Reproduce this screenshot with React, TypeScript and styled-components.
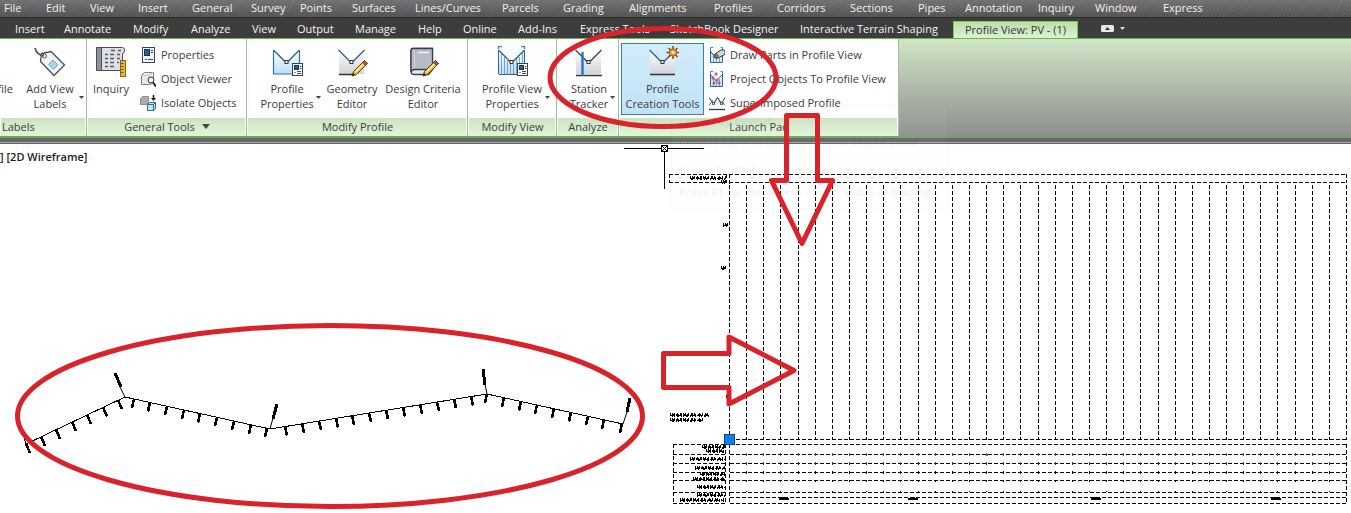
import React from "react";
import styled, { createGlobalStyle } from "styled-components";

const GlobalStyle = createGlobalStyle`
  *, *::before, *::after { box-sizing: border-box; }
  body {
    margin: 0;
    background: #fff;
    font-family: "Open Sans", "Noto Sans", sans-serif;
    font-size: 11px;
    line-height: 15px;
    color: #3c3c3c;
  }
  button {
    font: inherit;
    color: inherit;
    background: none;
    border: 0;
    padding: 0;
    margin: 0;
    white-space: nowrap;
  }
`;

const Page = styled.div`
  position: relative;
  display: flex;
  flex-direction: column;
  min-height: 100vh;
  overflow: hidden;
`;

const MenuBar = styled.nav`
  display: grid;
  grid-template-columns:
    42px 44px 48px 54px 59px 49px 52px 63px 87px 61px
    66px 85px 63px 73px 68px 47px 73px 57px 68px auto;
  justify-content: start;
  height: 18px;
  padding-left: 4px;
  border-bottom: 1px solid #2b2b2b;
  background:
    repeating-linear-gradient(135deg, rgba(255, 255, 255, 0.05) 0 1px, transparent 1px 3px),
    linear-gradient(#717171, #525252);
`;

const MenuItem = styled.button`
  padding-bottom: 2px;
  text-align: left;
  color: #f2f2f2;
`;

const TabBar = styled.div`
  display: grid;
  grid-template-columns:
    49px 69px 58px 61px 45px 58px 63px 45px 55px 62px
    90px 130px 153px 125px auto;
  justify-content: start;
  height: 20px;
  padding-left: 15px;
  background: #3d3d3d;
`;

const Tab = styled.button<{ $active?: boolean }>`
  text-align: ${(p) => (p.$active ? "center" : "left")};
  color: ${(p) => (p.$active ? "#2f3d2b" : "#f2f2f2")};
  ${(p) =>
    p.$active &&
    `
    margin-top: 3px;
    padding-bottom: 2px;
    border: 1px solid #7ad04c;
    border-bottom: 0;
    background: linear-gradient(#bddcae, #dff3d5);
  `}
`;

const TabTools = styled.div`
  display: flex;
  align-items: center;
  gap: 6px;
  padding-left: 23px;
`;

const Ribbon = styled.section`
  display: flex;
  height: 100px;
  border-top: 1px solid #6cb648;
  border-bottom: 2px solid #6fa85a;
  background: linear-gradient(#d0e5c6, #8f8f8f);
`;

const Panel = styled.div<{ $width: number }>`
  display: flex;
  flex-direction: column;
  flex: none;
  width: ${(p) => p.$width}px;
  border-right: 1px solid #a3bf98;
  background: #fff;
`;

const PanelBody = styled.div<{ $indent?: number }>`
  display: flex;
  flex: 1;
  align-items: flex-start;
  gap: 2px;
  padding-top: 4px;
  padding-left: ${(p) => p.$indent ?? 2}px;
`;

const PanelTitle = styled.div<{ $align?: string }>`
  display: flex;
  align-items: center;
  justify-content: ${(p) => p.$align ?? "center"};
  gap: 7px;
  height: 18px;
  margin: 0 1px;
  padding: 0 0 2px 1px;
  background: linear-gradient(#cde2c3, #e2f6d9);
`;

const LargeButton = styled.button<{ $active?: boolean }>`
  display: flex;
  height: 72px;
  border: 1px solid ${(p) => (p.$active ? "#3e7f9f" : "transparent")};
  background: ${(p) => (p.$active ? "linear-gradient(#d2ecf9, #bfe3f6)" : "none")};
`;

const Stack = styled.span<{ $width: number }>`
  display: flex;
  flex-direction: column;
  align-items: center;
  gap: 3px;
  width: ${(p) => p.$width}px;
  padding-top: 2px;
  svg { display: block; }
`;

const ButtonText = styled.span`
  display: block;
  white-space: pre;
  text-align: center;
`;

const CaretSlot = styled.span`
  display: flex;
  padding-top: 52px;
`;

const ClippedLabel = styled.span`
  display: flex;
  justify-content: flex-end;
  width: 13px;
  margin-right: 5px;
  padding-top: 38px;
`;

const SmallColumn = styled.div<{ $inset: number }>`
  display: flex;
  flex-direction: column;
  padding-left: ${(p) => p.$inset}px;
`;

const SmallButton = styled.button`
  display: flex;
  align-items: center;
  gap: 5px;
  height: 24px;
  span { padding-bottom: 2px; }
`;

const Divider = styled.div`
  height: 6px;
  border-bottom: 1px solid #626262;
  background: linear-gradient(#686868 0 4px, #ababab 4px 5px);
`;

const Canvas = styled.main`
  display: grid;
  flex: 1;
  align-items: start;
  overflow: hidden;
`;

const ViewLabel = styled.div`
  grid-area: 1 / 1;
  padding-top: 5px;
  font-weight: 600;
  color: #222;
`;

const Drawing = styled.svg`
  grid-area: 1 / 1;
  display: block;
`;

const GhostTip = styled.div`
  position: absolute;
  left: 671px;
  top: 105px;
  display: flex;
  flex-direction: column;
  gap: 14px;
  width: 277px;
  height: 104px;
  padding: 7px;
  border: 1px solid #777;
  border-radius: 2px;
  background: #f3f3f3;
  opacity: 0.04;
  color: #000;
  overflow: hidden;
  pointer-events: none;
`;

const TipLine = styled.div<{ $bold?: boolean }>`
  display: flex;
  justify-content: space-between;
  margin-bottom: ${(p) => (p.$bold ? -8 : 0)}px;
  font-weight: ${(p) => (p.$bold ? 700 : 400)};
  white-space: nowrap;
`;

const Markup = styled.svg`
  position: absolute;
  left: 0;
  top: 0;
  pointer-events: none;
`;

const HiddenDefs = styled.svg`
  position: absolute;
`;

/* ---------- icons ---------- */

const Caret = () => (
  <CaretSlot>
    <svg width="5" height="3" viewBox="0 0 5 3"><path d="M0 0h5L2.500 3z" fill="#444" /></svg>
  </CaretSlot>
);

const Defs = () => (
  <HiddenDefs width="0" height="0" aria-hidden="true">
    <defs>
      <linearGradient id="sheet" x1="0" y1="0" x2="0" y2="1">
        <stop offset="0" stopColor="#fbfbfc" /><stop offset="1" stopColor="#d2d4dc" />
      </linearGradient>
      <linearGradient id="sky" x1="0" y1="0" x2="0" y2="1">
        <stop offset="0" stopColor="#ffffff" /><stop offset="1" stopColor="#bcdcf3" />
      </linearGradient>
    </defs>
  </HiddenDefs>
);

const MiniSheet = () => (
  <g>
    <rect x=".5" y=".5" width="10" height="12" fill="#fff" stroke="#3b4250" />
    <rect x="2.500" y="2.500" width="4" height="4" fill="#1f5fa8" stroke="#17345f" />
    <path d="M8 3.500h1.500M8 5.500h1.500M5 8.500h4M5 10.500h4" stroke="#444b58" />
    <path d="M2.500 9.500h1" stroke="#222" />
  </g>
);

const Pencil = () => (
  <g>
    <path d="M28.500 14.500l3 3-11 11-4.500 1.500 1.500-4.500z" fill="#f3bb35" stroke="#54401c" />
    <path d="M19.500 26l9-9" stroke="#fff0a8" strokeWidth="1.500" />
    <path d="M26.500 16.500l3 3 2-2-3-3z" fill="#b5533d" stroke="#5b3a26" strokeWidth=".8" />
    <path d="M16 30l1-3 2 2z" fill="#222" />
  </g>
);

const VSheet = ({ blue, line = "#2e5f95" }: { blue?: boolean; line?: string }) => (
  <g>
    <path d="M3 5l12 11L28 5v23H3z" fill={blue ? "url(#sky)" : "url(#sheet)"} />
    <path d="M2.500 4L14 15.500M17 15.500L28.500 4" fill="none" stroke={line} strokeWidth="1.300" />
    <rect x="14" y="14.500" width="3" height="3" fill="#fff" stroke="#333" />
  </g>
);

const Icon32 = ({ children }: { children: React.ReactNode }) => (
  <svg width="32" height="32" viewBox="0 0 32 32">{children}</svg>
);

const Icon16 = ({ children }: { children: React.ReactNode }) => (
  <svg width="16" height="16" viewBox="0 0 16 16">{children}</svg>
);

const TagIcon = () => (
  <Icon32>
    <path d="M7.500 7.500L17 5.500 30.500 19 20 29.500 6.500 15.500z" fill="#f4f4f6" stroke="#4a4d55" strokeWidth="1.300" />
    <path d="M19 14l5 5-4.500 4.500-5-5z" fill="#a9d3ec" stroke="#7baac9" />
    <circle cx="10.500" cy="10" r="2" fill="#fff" stroke="#4a4d55" />
    <path d="M1 2c1 4 3 7 9 8" fill="none" stroke="#555" strokeWidth="1.700" />
  </Icon32>
);

const InquiryIcon = () => (
  <Icon32>
    <path d="M1.500 1.500h26q2 0 2 3t-2 3v17h-26z" fill="#dfe0e4" stroke="#4a4d55" />
    <rect x="2" y="2" width="4" height="22" fill="#8e929c" />
    <path d="M6.500 2v22" stroke="#4a4d55" />
    <path d="M16 4.500h4m3 0h3M10 8.500h3m2 0h4m3 0h3M10 12.500h3m2 0h4m3 0h3M10 16.500h3m2 0h4m3 0h2M10 20.500h3m2 0h4" stroke="#555a66" strokeWidth="1.300" />
    <rect x="25.500" y="14.500" width="5" height="16" fill="#eeb52f" stroke="#8c6412" />
    <path d="M26 17.500h2.500M26 20.500h2.500M26 23.500h2.500M26 26.500h2.500" stroke="#6d4c0d" />
  </Icon32>
);

const ProfilePropsIcon = () => (
  <Icon32>
    <VSheet blue />
    <path d="M2.500 4v24h20M28.500 4v14" fill="none" stroke="#2e72b4" strokeWidth="1.200" />
    <g transform="translate(21 17)"><MiniSheet /></g>
  </Icon32>
);

const GeometryIcon = () => (
  <Icon32><VSheet /><path d="M3 28.500h14" stroke="#333" strokeWidth="1.500" /><Pencil /></Icon32>
);

const BookIcon = () => (
  <Icon32>
    <path d="M5.500 2.500q-1.500 0-1.500 3v20q0 3 3.500 3h14l4-5v-21z" fill="#e7e8ec" stroke="#3b404c" strokeWidth="1.300" />
    <path d="M5.500 2.500h20v21h-18q-2.500 0-3.500 2.500v-20q0-3.500 1.500-3.500z" fill="#b8bbc5" stroke="#3b404c" strokeWidth="1.300" />
    <path d="M7.500 4v18" stroke="#d3d5dc" />
    <path d="M11 6.500h11" stroke="#f2f2f5" strokeWidth="1.500" />
    <Pencil />
  </Icon32>
);

const ViewPropsIcon = () => (
  <Icon32>
    <VSheet blue />
    <path d="M5.500 8v20M8.500 11v17M11.500 13v15M14.500 18v10M17.500 17v11M20.500 13v15M23.500 11v8M26.500 7v12" stroke="#6fa3d2" />
    <path d="M3 28.500h19M2.500 4v24M28.500 4v14" stroke="#2d64a0" />
    <path d="M2.500 3V.5H6M25 .5h3.500V3" fill="none" stroke="#2d8fe0" strokeWidth="1.500" />
    <g transform="translate(21 17)"><MiniSheet /></g>
  </Icon32>
);

const TrackerIcon = () => (
  <Icon32>
    <VSheet line="#444" />
    <path d="M3 29.500h26" stroke="#333" strokeWidth="1.500" />
    <path d="M9.500 6v24" stroke="#1d74cc" strokeWidth="2.400" />
  </Icon32>
);

const CreationIcon = () => (
  <Icon32>
    <VSheet />
    <path d="M3 28.500h25" stroke="#333" strokeWidth="1.500" />
    <path d="M26 0v13M19.500 6.500h13M21.500 2l9 9M30.500 2l-9 9" stroke="#8d4d12" strokeWidth="1.600" />
    <circle cx="26" cy="6.500" r="3.700" fill="#f29a2a" stroke="#a35410" />
    <circle cx="26" cy="6.500" r="1.500" fill="#fff" />
  </Icon32>
);

const PropertiesIcon = () => (
  <Icon16>
    <rect x="2.500" y=".5" width="12" height="15" fill="#f3f5f8" stroke="#3b4250" />
    <rect x="4.500" y="2.500" width="5" height="6" fill="#1f5fa8" stroke="#17345f" />
    <path d="M11 3.500h2M11 5.500h2M8 12.500h5M5 12l1 1 1-1" stroke="#444b58" fill="none" />
  </Icon16>
);

const ViewerIcon = () => (
  <Icon16>
    <path d="M1.500 4.500l3-3h9v9l-3 3h-9z" fill="#e9ebee" stroke="#7a7f89" />
    <path d="M1.500 4.500h8v9M9.500 4.500l3-3" fill="none" stroke="#c6c9cf" />
    <circle cx="11" cy="9" r="3" fill="#e8f3fa" stroke="#333" />
    <path d="M13 11.500l3 4" stroke="#222" strokeWidth="2" />
  </Icon16>
);

const IsolateIcon = () => (
  <Icon16>
    <path d="M.5 3.500l2-2h6v6l-2 2h-6z" fill="#a9abb0" stroke="#8a8c91" />
    <path d="M7.500 9.500l2-2h6v6l-2 2h-6z" fill="#c3e5f8" stroke="#2c6e9e" />
    <path d="M7.500 9.500h6v6M13.500 9.500l2-2" fill="none" stroke="#2c6e9e" />
    <path d="M13.500 0v4" stroke="#111" strokeWidth="1.500" />
    <path d="M11 3h5l-2.500 3z" fill="#111" />
  </Icon16>
);

const MiniProfile = () => (
  <g>
    <path d="M2 5l5 5 6-5v10H2z" fill="#d7e8f6" />
    <path d="M4.500 8v7M7.500 10v5M10.500 8v7" stroke="#79a7d1" />
    <path d="M1.500 3v12.500h12V3" fill="none" stroke="#2d64a0" />
    <path d="M1.500 3V.5H4M11.500.5h2V3" fill="none" stroke="#2d8fe0" />
  </g>
);

const DrawPartsIcon = () => (
  <Icon16>
    <MiniProfile />
    <path d="M2 5l5 6" stroke="#3a4353" />
    <path d="M6 7l6-4q3-1 4 1t-1 4l-6 3q-3 1-4-1t1-3z" fill="#d3d5da" stroke="#333" />
    <ellipse cx="7.500" cy="9" rx="1.500" ry="1.700" fill="#888" stroke="#333" strokeWidth=".8" />
  </Icon16>
);

const ProjectIcon = () => (
  <Icon16>
    <MiniProfile />
    <path d="M2 4l5 6 6-6" fill="none" stroke="#4a6f98" />
    {[[7, 3], [4, 7], [8, 9], [10, 12], [5, 12]].map(([x, y]) => (
      <circle key={`${x}-${y}`} cx={x} cy={y} r="1.100" fill="#fff" stroke="#a32038" strokeWidth=".9" />
    ))}
  </Icon16>
);

const SuperimposedIcon = () => (
  <Icon16>
    <path d="M0 2.500l4.500 6 4-6 4 6 3.500-6" fill="none" stroke="#333" />
    <path d="M0 10.500l4-5.500M5.500 8l3-5.500 3 5.500M13 6l3 4.500" fill="none" stroke="#2a72bd" />
    <path d="M3.500 7.500h2v2h-2zM11.500 7.500h2v2h-2z" fill="#fff" stroke="#333" strokeWidth=".8" />
    <path d="M0 14.500h16" stroke="#333" strokeWidth="1.300" />
  </Icon16>
);

/* ---------- drawing area ---------- */

const stations = Array.from({ length: 37 }, (_, i) => Math.round(729 + 17.14 * i) + 0.5);
const bandRows = [444.5, 454.5, 463.5, 472.5, 480.5, 492.5, 497.5, 503.5];
const labelRows = bandRows.filter((y) => y !== 497.5);

const scribbles: [number, number, number][] = [
  [690, 726, 178], [721, 727, 182], [723, 729, 225], [721, 727, 268], [726, 729, 397],
  [670, 709, 415], [670, 703, 420],
  [702, 725, 447], [706, 724, 451], [690, 726, 459], [695, 725, 468],
  [700, 725, 474], [693, 725, 479], [697, 725, 487], [697, 725, 495], [680, 724, 500],
];

const scribblePath = (x1: number, x2: number, y: number) => {
  let d = "";
  for (let x = x1, i = 0; x < x2; x += 1, i += 1) {
    if (i % 7 === 5) continue;
    const up = [2, 0, 2, 1, 2, 0, 1, 2, 1, 0, 2][i % 11];
    const down = [2, 1, 0, 2, 1, 2, 0, 1, 2][(i + y) % 9];
    d += `M${x + 0.5} ${y - up}V${y + Math.max(down, 1)}`;
  }
  return d;
};

type Leg = { from: number[]; to: number[]; ticks: number[]; dx: number };

const legs: Leg[] = [
  { from: [26, 444], to: [125, 397], ticks: [26, 41, 56, 72, 87, 103, 118], dx: 4 },
  { from: [125, 397], to: [270, 429], ticks: [134, 150, 167, 184, 200, 217, 234, 251, 267], dx: -2 },
  { from: [270, 429], to: [487, 394], ticks: [285, 302, 319, 336, 352, 369, 386, 403, 420, 437, 454, 471], dx: 2 },
  { from: [487, 394], to: [623, 424], ticks: [487, 504, 521, 537, 554, 571, 588, 604, 622], dx: -2 },
];

const tickPath = ({ from, to, ticks, dx }: Leg) =>
  ticks
    .map((x) => {
      const y = from[1] + ((x - from[0]) * (to[1] - from[1])) / (to[0] - from[0]);
      return `M${x} ${y.toFixed(1)}l${dx / 4} 2l${(dx * 3) / 4} 7`;
    })
    .join("");

const Plan = () => (
  <g stroke="#000" fill="none">
    <path d="M24 438l2 6L125 397 270 429 487 394 623 424" shapeRendering="crispEdges" />
    <path d="M125 397l-5-10M270 429l3-11M487 394l-2-10M623 424l4-12" />
    <path d="M121 387l-6-14M273 419l4-15M485 385l-2-16M627 412l3-14" strokeWidth="3" shapeRendering="crispEdges" />
    {legs.map((leg) => (
      <path key={leg.to[0]} d={tickPath(leg)} strokeWidth="2.600" shapeRendering="crispEdges" />
    ))}
  </g>
);

const ProfileGrid = () => (
  <g fill="none" stroke="#000" shapeRendering="crispEdges">
    <g strokeDasharray="4 2">
      <path d="M669 174.500H1347M669 182.500H1347M669.500 174v9M726.500 174v9M1346.500 174v9M729.500 174v10" />
      {stations.map((x) => <path key={x} d={`M${x} 185V440`} />)}
      <path d="M736 439.500H1347" />
      {bandRows.map((y) => <path key={y} d={`M730 ${y}H1347`} />)}
      {labelRows.map((y) => <path key={y} d={`M673 ${y}H726`} />)}
      <path d="M673.500 444V504M725.500 444V504M729.500 444V504M1346.500 444V504" />
    </g>
    {stations.slice(1, -1).map((x) => (
      <g key={x}>
        <path d={`M${x} 453v3`} stroke="#a03636" />
        <path d={`M${x} 462v3`} stroke="#5c3030" />
        <path d={`M${x} 471v3M${x} 480v2M${x} 491v1`} />
      </g>
    ))}
    <path d="M986 454.500h2" stroke="#d33" strokeWidth="2" />
    {[779, 908, 1091, 1271].map((x) => (
      <path key={x} d={`M${x} 499h10M${x + 3} 497.500h4`} strokeWidth="2" />
    ))}
    {scribbles.map(([a, b, y]) => <path key={`${a}-${y}`} d={scribblePath(a, b, y)} />)}
    <rect x="724.500" y="434.500" width="10" height="10" fill="#0a80f5" stroke="#1d3f68" />
  </g>
);

const Crosshair = () => (
  <g fill="none" stroke="#000" shapeRendering="crispEdges">
    <path d="M624 148.500h80M664.500 145v44" />
    <rect x="661.500" y="145.500" width="6" height="6" fill="#fff" />
    <path d="M662 146l5 5M667 146l-5 5" />
  </g>
);

const menus = [
  "File", "Edit", "View", "Insert", "General", "Survey", "Points", "Surfaces", "Lines/Curves", "Parcels",
  "Grading", "Alignments", "Profiles", "Corridors", "Sections", "Pipes", "Annotation", "Inquiry", "Window", "Express",
];

const tabs = [
  "Insert", "Annotate", "Modify", "Analyze", "View", "Output", "Manage", "Help", "Online", "Add-Ins",
  "Express Tools", "SketchBook Designer", "Interactive Terrain Shaping",
];

type LargeProps = { icon: React.ReactNode; text: string; width: number; caret?: boolean; active?: boolean };

const Large = ({ icon, text, width, caret, active }: LargeProps) => (
  <LargeButton $active={active}>
    <Stack $width={width}>
      {icon}
      <ButtonText>{text}</ButtonText>
    </Stack>
    {caret && <Caret />}
  </LargeButton>
);

const Small = ({ icon, text }: { icon: React.ReactNode; text: string }) => (
  <SmallButton>
    {icon}
    <span>{text}</span>
  </SmallButton>
);

export default function App() {
  return (
    <Page>
      <GlobalStyle />
      <Defs />
      <MenuBar>
        {menus.map((m) => <MenuItem key={m}>{m}</MenuItem>)}
      </MenuBar>
      <TabBar>
        {tabs.map((t) => <Tab key={t}>{t}</Tab>)}
        <Tab $active>Profile View: PV - (1)</Tab>
        <TabTools>
          <svg width="13" height="7" viewBox="0 0 13 7">
            <rect width="13" height="7" rx="1.500" fill="#e6e6e6" /><path d="M4 5h5L6.500 2z" fill="#333" />
          </svg>
          <svg width="5" height="3" viewBox="0 0 5 3"><path d="M0 0h5L2.500 3z" fill="#ddd" /></svg>
        </TabTools>
      </TabBar>
      <Ribbon>
        <Panel $width={87}>
          <PanelBody $indent={0}>
            <ClippedLabel>file</ClippedLabel>
            <Large icon={<TagIcon />} text={"Add View\nLabels"} width={58} caret />
          </PanelBody>
          <PanelTitle $align="flex-start">Labels</PanelTitle>
        </Panel>
        <Panel $width={160}>
          <PanelBody>
            <Large icon={<InquiryIcon />} text="Inquiry" width={42} />
            <SmallColumn $inset={5}>
              <Small icon={<PropertiesIcon />} text="Properties" />
              <Small icon={<ViewerIcon />} text="Object Viewer" />
              <Small icon={<IsolateIcon />} text="Isolate Objects" />
            </SmallColumn>
          </PanelBody>
          <PanelTitle>
            General Tools
            <svg width="8" height="5" viewBox="0 0 8 5"><path d="M0 0h8L4 5z" fill="#444" /></svg>
          </PanelTitle>
        </Panel>
        <Panel $width={221}>
          <PanelBody $indent={10}>
            <Large icon={<ProfilePropsIcon />} text={"Profile\nProperties"} width={58} caret />
            <Large icon={<GeometryIcon />} text={"Geometry\nEditor"} width={54} />
            <Large icon={<BookIcon />} text={"Design Criteria\nEditor"} width={80} />
          </PanelBody>
          <PanelTitle>Modify Profile</PanelTitle>
        </Panel>
        <Panel $width={89}>
          <PanelBody $indent={10}>
            <Large icon={<ViewPropsIcon />} text={"Profile View\nProperties"} width={66} caret />
          </PanelBody>
          <PanelTitle>Modify View</PanelTitle>
        </Panel>
        <Panel $width={62}>
          <PanelBody $indent={10}>
            <Large icon={<TrackerIcon />} text={"Station\nTracker"} width={42} caret />
          </PanelBody>
          <PanelTitle>Analyze</PanelTitle>
        </Panel>
        <Panel $width={280}>
          <PanelBody>
            <Large icon={<CreationIcon />} text={"Profile\nCreation Tools"} width={81} active />
            <SmallColumn $inset={3}>
              <Small icon={<DrawPartsIcon />} text="Draw Parts in Profile View" />
              <Small icon={<ProjectIcon />} text="Project Objects To Profile View" />
              <Small icon={<SuperimposedIcon />} text="Superimposed Profile" />
            </SmallColumn>
          </PanelBody>
          <PanelTitle>Launch Pad</PanelTitle>
        </Panel>
      </Ribbon>
      <Divider />
      <Canvas>
        <ViewLabel>] [2D Wireframe]</ViewLabel>
        <Drawing width="1351" height="369" viewBox="0 144 1351 369">
          <Crosshair />
          <Plan />
          <ProfileGrid />
        </Drawing>
      </Canvas>
      <GhostTip>
        <TipLine $bold>Create by Layout</TipLine>
        <TipLine>Creates a profile using the Profile Layout Tools</TipLine>
        <TipLine $bold>CreateProfileLayout</TipLine>
        <TipLine $bold><span>Press F1 for more help</span><span>Video is loading...</span></TipLine>
      </GhostTip>
      <Markup width="1351" height="513" viewBox="0 0 1351 513">
        <g fill="none" stroke="#d9222a" strokeWidth="5" strokeLinejoin="round">
          <ellipse cx="663" cy="77.500" rx="113" ry="49" />
          <ellipse cx="330" cy="416" rx="312.500" ry="90.500" />
          <path d="M786.500 115.500H817.500V180.500H832.500L802 243.500 771.500 180.500H786.500z" />
          <path d="M663.500 353.500H729V337L794 370.500 729 404V387.500H663.500z" />
        </g>
      </Markup>
    </Page>
  );
}
